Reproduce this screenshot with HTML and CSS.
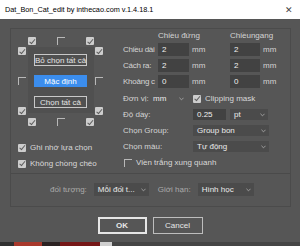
FILE: index.html
```html
<!DOCTYPE html>
<html lang="vi">
<head>
  <meta charset="UTF-8">
  <title>Dat_Bon_Cat_edit</title>
  <link rel="stylesheet" href="styles.css">
</head>
<body>
  <div class="titlebar">
    <span class="title">Dat_Bon_Cat_edit by inthecao.com v.1.4.18.1</span>
    <span class="close">✕</span>
  </div>

  <div class="window">
    <div class="panel">
      <div class="top">
        <!-- Cạnh cắt -->
        <div class="leftCol">
          <div class="sides">
            <div class="edgeRow rowTop">
              <span class="box on"></span><span class="box"></span><span class="box on"></span>
            </div>
            <div class="edgeCol colLeft">
              <span class="box on"></span><span class="box"></span><span class="box on"></span>
            </div>
            <div class="frame">
              <button class="btn">Bỏ chọn tất cả</button>
              <button class="btn primary">Mặc định</button>
              <button class="btn">Chọn tất cả</button>
            </div>
            <div class="edgeCol colRight">
              <span class="box on"></span><span class="box"></span><span class="box on"></span>
            </div>
            <div class="edgeRow rowBottom">
              <span class="box on"></span><span class="box"></span><span class="box on"></span>
            </div>
          </div>
          <label class="check remember"><span class="box on"></span>Ghi nhớ lựa chọn</label>
          <label class="check"><span class="box on"></span>Không chồng chéo</label>
        </div>

        <!-- Kích thước -->
        <div class="rightCol">
          <div class="dims">
            <span></span>
            <span class="head">Chiều đứng</span>
            <span class="head">Chiềungang</span>

            <span class="lbl">Chiều dài</span>
            <span class="field">2</span><span class="unit">mm</span>
            <span class="field">2</span><span class="unit">mm</span>

            <span class="lbl">Cách ra:</span>
            <span class="field">2</span><span class="unit">mm</span>
            <span class="field">2</span><span class="unit">mm</span>

            <span class="lbl">Khoảng c</span>
            <span class="field">0</span><span class="unit">mm</span>
            <span class="field">0</span><span class="unit">mm</span>
          </div>

          <div class="opts">
            <span class="lbl">Đơn vị:</span>
            <span class="select plain unitSel">mm<svg class="chev" viewBox="0 0 6 4"><path d="M0.5 0.5 L3 3 L5.5 0.5"/></svg></span>
            <label class="check clip"><span class="box on"></span>Clipping mask</label>

            <span class="lbl wide">Độ dầy:</span>
            <span class="field thick">0.25</span>
            <span class="select ptSel">pt<svg class="chev" viewBox="0 0 6 4"><path d="M0.5 0.5 L3 3 L5.5 0.5"/></svg></span>

            <span class="lbl wide">Chọn Group:</span>
            <span class="select long">Group bon<svg class="chev" viewBox="0 0 6 4"><path d="M0.5 0.5 L3 3 L5.5 0.5"/></svg></span>

            <span class="lbl wide">Chọn màu:</span>
            <span class="select long">Tự động<svg class="chev" viewBox="0 0 6 4"><path d="M0.5 0.5 L3 3 L5.5 0.5"/></svg></span>
          </div>

          <label class="check border"><span class="box"></span>Viền trắng xung quanh</label>
        </div>
      </div>

      <div class="sep"></div>

      <div class="limitRow">
        <span class="dim">đối tượng:</span>
        <span class="select objSel">Mỗi đối t...<svg class="chev" viewBox="0 0 6 4"><path d="M0.5 0.5 L3 3 L5.5 0.5"/></svg></span>
        <span class="dim limitLbl">Giới hạn:</span>
        <span class="select geoSel">Hình học<svg class="chev" viewBox="0 0 6 4"><path d="M0.5 0.5 L3 3 L5.5 0.5"/></svg></span>
      </div>
    </div>

    <div class="actions">
      <button class="action ok">OK</button>
      <button class="action">Cancel</button>
    </div>
  </div>

  <div class="taskbar">
    <span class="t1"></span><span class="t2"></span><span class="t3"></span><span class="t4"></span><span class="t5"></span><span class="t6"></span>
  </div>
</body>
</html>
```

FILE: styles.css
```css
html, body {
  margin: 0;
  width: 300px;
  height: 246px;
  overflow: hidden;
  background-color: #565656;
  font-family: "Liberation Sans", Arial, sans-serif;
  font-size: 8px;
  color: #d4d4d4;
}

.titlebar {
  height: 19px;
  background-color: #fff;
  display: flex;
  align-items: center;
  justify-content: space-between;
  padding: 0 5px;
  color: #000;
}

.title {
  font-size: 7.3px;
}

.close {
  font-size: 9px;
  color: #444;
  margin-right: 2px;
}

.window {
  height: 223px;
  display: flex;
  flex-direction: column;
}

.panel {
  margin: 9px 9px 0 10px;
  height: 179px;
  box-sizing: border-box;
  border: 1px solid #4b4b4b;
}

.top {
  display: flex;
  height: 144px;
}

/* checkbox */
.box {
  display: inline-block;
  flex: none;
  width: 8px;
  height: 8px;
  box-sizing: border-box;
  border-top: 1px solid #b8b8b8;
  border-left: 1px solid #b8b8b8;
  position: relative;
}

.box.on {
  border: none;
  background-color: #cdcdcd;
  border-radius: 1px;
}

.box.on::after {
  content: "";
  position: absolute;
  left: 2.5px;
  top: 0.5px;
  width: 2px;
  height: 4.5px;
  border-right: 1.2px solid #5c5c5c;
  border-bottom: 1.2px solid #5c5c5c;
  transform: rotate(40deg);
}

.check {
  display: flex;
  align-items: center;
  gap: 4px;
  height: 9px;
  white-space: nowrap;
  color: #d8d8d8;
}

/* cột trái */
.leftCol {
  width: 112px;
  padding: 8px 0 0 7px;
  box-sizing: border-box;
}

.sides {
  display: grid;
  grid-template-columns: 10px 66px 11px;
  grid-template-rows: 10px 71px 9px;
}

.edgeRow {
  grid-column: 2;
  display: flex;
  justify-content: space-between;
  align-items: flex-start;
}

.rowTop { grid-row: 1; }
.rowBottom { grid-row: 3; }

.edgeCol {
  grid-row: 2;
  height: 68px;
  display: flex;
  flex-direction: column;
  justify-content: space-between;
}

.colLeft { grid-column: 1; }
.colRight { grid-column: 3; padding-left: 1px; }

.frame {
  grid-column: 2;
  grid-row: 2;
  height: 66px;
  box-sizing: border-box;
  background-color: #505050;
  padding-top: 7px;
  display: flex;
  flex-direction: column;
  align-items: center;
  gap: 9px;
}

.btn {
  width: 53px;
  height: 12px;
  margin: 0 1px 0 0;
  padding: 0;
  box-sizing: border-box;
  border: 1px solid #c8c8c8;
  background: none;
  color: #e4e4e4;
  font-family: inherit;
  font-size: 8px;
  white-space: nowrap;
  overflow: hidden;
}

.btn.primary {
  border: none;
  background-color: #3b8ded;
  color: #fff;
}

.remember {
  margin-top: 16px;
  margin-bottom: 7px;
}

/* cột phải */
.rightCol {
  flex: 1;
  padding-top: 1px;
}

.dims {
  display: grid;
  grid-template-columns: 35px 31px 41px 30px auto;
  grid-template-rows: 10px 13px 13px 13px;
  row-gap: 3px;
  align-items: center;
}

.head {
  grid-column: span 2;
  white-space: nowrap;
}

.lbl {
  white-space: nowrap;
}

.dims .lbl {
  letter-spacing: -0.25px;
}

.lbl.wide {
  grid-column: 1 / 3;
}

.field {
  height: 100%;
  box-sizing: border-box;
  display: flex;
  align-items: center;
  padding-left: 4px;
  background-color: #424242;
  color: #f0f0f0;
}

.unit {
  padding-left: 3px;
}

.opts {
  margin-top: 5px;
  display: grid;
  grid-template-columns: 30px 40px 37px 39px;
  grid-template-rows: repeat(4, 11px);
  row-gap: 5px;
  align-items: center;
}

.select {
  height: 11px;
  box-sizing: border-box;
  display: flex;
  align-items: center;
  justify-content: space-between;
  padding: 0 3px 0 4px;
  background-color: #4b4b4b;
  color: #ececec;
  white-space: nowrap;
}

.select.plain {
  background: none;
  padding-left: 0;
}

.chev {
  width: 5px;
  height: 4px;
  fill: none;
  stroke: #b8b8b8;
  stroke-width: 0.9;
}

.unitSel { width: 34px; }
.clip { grid-column: 3 / 5; }
.thick { width: 33px; height: 11px; }
.ptSel { width: 38px; }
.long { grid-column: 3 / 5; width: 76px; }

.border {
  margin: 6px 0 0 1px;
}

.sep {
  height: 1px;
  background-color: #4a4a4a;
}

.limitRow {
  display: flex;
  align-items: center;
  padding: 9px 0 0 39px;
}

.dim {
  color: #ababab;
}

.objSel {
  width: 55px;
  height: 13px;
  margin-left: 7px;
}

.limitLbl {
  margin-left: 9px;
}

.geoSel {
  width: 56px;
  height: 13px;
  margin-left: 7px;
}

.actions {
  margin-top: 10px;
  display: flex;
  justify-content: center;
  gap: 6px;
}

.action {
  width: 50px;
  height: 17px;
  padding: 0;
  box-sizing: border-box;
  border: 1px solid #bdbdbd;
  background: none;
  color: #e8e8e8;
  font-family: inherit;
  font-size: 8px;
}

.action.ok {
  width: 49px;
  border: 2px solid #e6e6e6;
  font-weight: bold;
}

.taskbar {
  height: 4px;
  display: flex;
}

.taskbar span { height: 100%; }
.t1 { width: 14px; background-color: #303030; }
.t2 { width: 28px; background-color: #a8392c; }
.t3 { width: 18px; background-color: #2b2222; }
.t4 { width: 40px; background-color: #761717; }
.t5 { width: 12px; background-color: #cfcfcf; }
.t6 { flex: 1; background-color: #454545; }
```
